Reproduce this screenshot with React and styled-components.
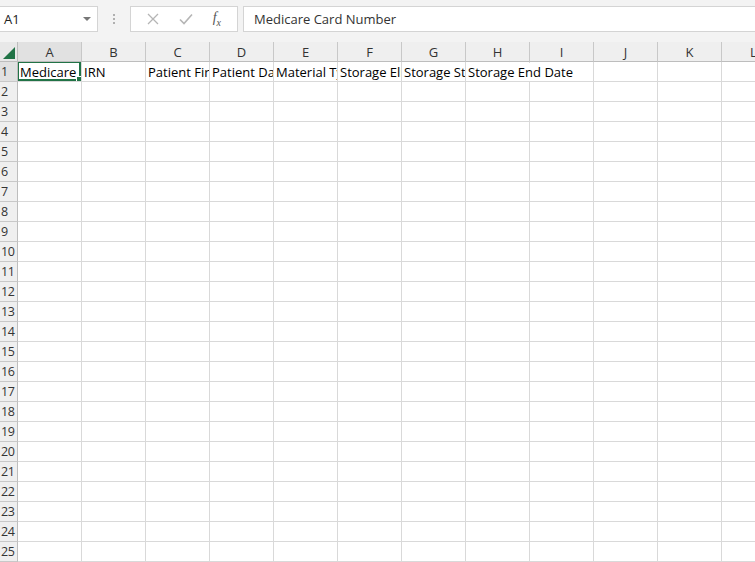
import React from "react";
import styled, { createGlobalStyle } from "styled-components";

const GlobalStyle = createGlobalStyle`
  body {
    margin: 0;
    background: #fff;
    font-family: "Open Sans", "Liberation Sans", sans-serif;
    overflow: hidden;
  }
`;

const Sheet = styled.div`
  width: 755px;
  height: 562px;
  overflow: hidden;
  background: #fff;
`;

const FormulaBar = styled.div`
  display: flex;
  align-items: center;
  height: 42px;
  padding: 0 0 4px 0;
  box-sizing: border-box;
  background: #f3f3f3;
`;

const NameBox = styled.div`
  display: flex;
  align-items: center;
  justify-content: space-between;
  width: 98px;
  height: 26px;
  box-sizing: border-box;
  background: #fff;
  border: 1px solid #d4d4d4;
  border-left: none;
  padding: 0 6px 0 4px;
  font-size: 13px;
  color: #222;
`;

const Caret = styled.span`
  width: 0;
  height: 0;
  border-left: 4px solid transparent;
  border-right: 4px solid transparent;
  border-top: 4px solid #777;
`;

const Dots = styled.div`
  width: 32px;
  display: flex;
  flex-direction: column;
  align-items: center;
  gap: 2px;

  span {
    width: 2px;
    height: 2px;
    background: #b0b0b0;
  }
`;

const FxBox = styled.div`
  display: flex;
  align-items: center;
  justify-content: space-around;
  width: 108px;
  height: 26px;
  box-sizing: border-box;
  background: #fff;
  border: 1px solid #d4d4d4;
  padding: 0 6px;
  margin-right: 5px;
`;

const Fx = styled.span`
  font-family: "Liberation Serif", serif;
  font-style: italic;
  font-size: 14px;
  color: #555;

  sub {
    font-size: 10px;
  }
`;

const FormulaInput = styled.div`
  flex: 1;
  height: 26px;
  box-sizing: border-box;
  background: #fff;
  border: 1px solid #d4d4d4;
  border-right: none;
  padding-left: 10px;
  display: flex;
  align-items: center;
  font-size: 13px;
  color: #333;
`;

const Grid = styled.div`
  display: grid;
  grid-template-columns: 18px repeat(12, 64px);
  grid-auto-rows: 20px;
  width: 786px;
`;

const Corner = styled.div`
  position: relative;
  background: #e8e8e8;
  border-right: 1px solid #bdbdbd;
  border-bottom: 1px solid #bdbdbd;
  box-sizing: border-box;

  &::after {
    content: "";
    position: absolute;
    right: 2px;
    bottom: 2px;
    border-left: 12px solid transparent;
    border-bottom: 12px solid #217346;
  }
`;

const ColHead = styled.div`
  display: flex;
  align-items: center;
  justify-content: center;
  box-sizing: border-box;
  background: ${(p) => (p.active ? "#e1e1e1" : "#efefef")};
  border-right: 1px solid #c8c8c8;
  border-bottom: 1px solid #bdbdbd;
  font-size: 13px;
  color: #333;
`;

const RowHead = styled.div`
  display: flex;
  align-items: center;
  box-sizing: border-box;
  background: ${(p) => (p.active ? "#e1e1e1" : "#efefef")};
  border-right: 1px solid #bdbdbd;
  border-bottom: 1px solid #c8c8c8;
  padding-left: 1px;
  font-size: 12.5px;
  letter-spacing: -0.3px;
  color: #333;
  overflow: hidden;
`;

const Cell = styled.div`
  position: relative;
  box-sizing: border-box;
  border-right: 1px solid #d9d9d9;
  border-bottom: 1px solid #d9d9d9;
  font-size: 13px;
  color: #000;
  white-space: nowrap;
  padding-left: 2px;
  line-height: 20px;
  overflow: ${(p) => (p.spill ? "visible" : "hidden")};
  z-index: ${(p) => (p.spill ? 1 : 0)};
`;

const Text = styled.span`
  position: relative;
  background: #fff;
  padding-right: 1px;
`;

const Selection = styled.div`
  position: absolute;
  left: -1px;
  top: -1px;
  right: 0;
  bottom: 0;
  border: 2px solid #217346;
  z-index: 3;

  &::after {
    content: "";
    position: absolute;
    right: -4px;
    bottom: -4px;
    width: 5px;
    height: 5px;
    background: #217346;
    border: 1px solid #fff;
  }
`;

const cols = ["A", "B", "C", "D", "E", "F", "G", "H", "I", "J", "K", "L"];
const headers = [
  "Medicare Card Number",
  "IRN",
  "Patient First Name",
  "Patient Date of Birth",
  "Material Type",
  "Storage Eligible",
  "Storage Start Date",
  "Storage End Date",
];

export default function App() {
  const rows = Array.from({ length: 25 }, (_, i) => i + 1);
  return (
    <Sheet>
      <GlobalStyle />
      <FormulaBar>
        <NameBox>
          A1
          <Caret />
        </NameBox>
        <Dots>
          <span />
          <span />
          <span />
        </Dots>
        <FxBox>
          <svg width="12" height="12" viewBox="0 0 12 12">
            <path d="M1 1 L11 11 M11 1 L1 11" stroke="#b5b5b5" strokeWidth="1.3" fill="none" />
          </svg>
          <svg width="14" height="12" viewBox="0 0 14 12">
            <path d="M1 6.5 L5 10.5 L13 1.5" stroke="#b5b5b5" strokeWidth="1.6" fill="none" />
          </svg>
          <Fx>
            f<sub>x</sub>
          </Fx>
        </FxBox>
        <FormulaInput>Medicare Card Number</FormulaInput>
      </FormulaBar>
      <Grid>
        <Corner />
        {cols.map((c, i) => (
          <ColHead key={c} active={i === 0}>
            {c}
          </ColHead>
        ))}
        {rows.map((r) => (
          <React.Fragment key={r}>
            <RowHead active={r === 1}>{r}</RowHead>
            {cols.map((c, ci) => {
              const text = r === 1 ? headers[ci] : null;
              const spill = r === 1 && ci === 7;
              return (
                <Cell key={c} spill={spill}>
                  {text && <Text>{text}</Text>}
                  {r === 1 && ci === 0 && <Selection />}
                </Cell>
              );
            })}
          </React.Fragment>
        ))}
      </Grid>
    </Sheet>
  );
}
